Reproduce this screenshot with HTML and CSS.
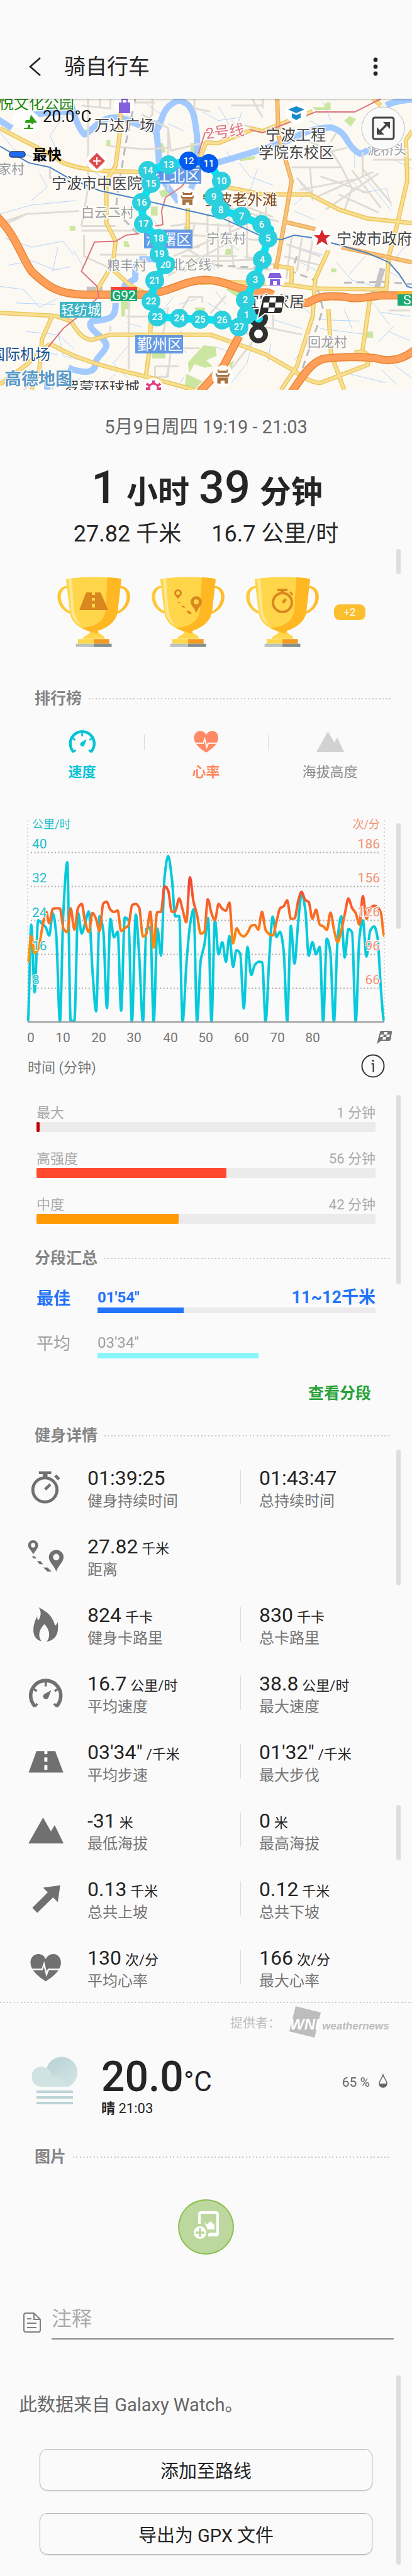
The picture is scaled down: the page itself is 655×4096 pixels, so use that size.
FILE: index.html
```html
<!DOCTYPE html>
<html lang="zh-CN">
<head>
<meta charset="utf-8">
<meta name="viewport" content="width=device-width, initial-scale=1">
<title>骑自行车</title>
<link rel="stylesheet" href="styles.css">
</head>
<body>
<svg class="defs" aria-hidden="true">
  <symbol id="i-watch" viewBox="0 0 58 58">
    <circle cx="27.4" cy="33" r="19.2" fill="none" stroke="currentColor" stroke-width="4.8"/>
    <path fill="currentColor" d="M17.800 3.600h19.700v4.300h-6v5h-7.600v-5h-6.100zM45.800 8.500l5.900 6.200-3.800 3.100-5.900-6.200zM34.500 22.400l3 3.400-8 8.100-3.300-3.400z"/>
  </symbol>
  <symbol id="i-route" viewBox="0 0 58 58">
    <g transform="translate(-44 29) scale(.4177 .3093) translate(0 -667)" fill="currentColor" fill-rule="evenodd">
      <path d="M127 658C120 640 107 630 107 612a19 26 0 0 1 38 0C145 630 134 640 127 658zM118 612a8 12 0 0 0 16 0a8 12 0 0 0-16 0z"/>
      <path d="M214 748C206 715 186 700 186 673a28 37 0 0 1 56 0C242 700 222 715 214 748zM202 673a12 17 0 0 0 24 0a12 17 0 0 0-24 0z"/>
      <path d="M121 669h11l7 11h-11zM141 694h13l10 16h-13zM165 727h16l15 20h-16z"/>
    </g>
  </symbol>
  <symbol id="i-flame" viewBox="0 0 58 58">
    <g transform="translate(-44 29) scale(.4177 .3093) translate(0 -1019.500)" fill="currentColor">
      <path d="M147 931C185 955 205 990 209 1026C215 1022 219 1014 220 1006C224 1060 217 1098 177 1109C193 1085 190 1045 169 1018C148 1045 143 1080 158 1106C120 1095 120 1030 142 977C141 985 143 993 144 999C155 985 160 955 147 931Z"/>
    </g>
  </symbol>
  <symbol id="i-gauge" viewBox="0 0 58 58">
    <path d="M11.600 50A24 24 0 1 1 45.800 50" fill="none" stroke="currentColor" stroke-width="5.600"/>
    <path d="M28.700 12v6.500M9.500 22.500l5 3.500M48 22.500l-5 3.500M11 50.500l4.500-4.500M46.400 50.500l-4.500-4.500" fill="none" stroke="currentColor" stroke-width="3.600"/>
    <path fill="currentColor" d="M37.400 24.400L33 36.500C31 40.500 24.600 39 24.500 34.500C24.500 32.500 25.500 31.500 26.500 30.800z"/>
  </symbol>
  <symbol id="i-road" viewBox="0 0 58 58">
    <path fill="currentColor" fill-rule="evenodd" d="M14 12.200H26.500V16.500Q26.500 17.200 27.300 17.200H30.700Q31.400 17.200 31.400 16.500V12.200H43.800L56.700 46.600H1.500zM27.200 22.300q-.8 0-.8.8v5.400q0 .8.800.8h3.400q.8 0 .8-.8v-5.400q0-.8-.8-.8zM27.200 34.600q-.8 0-.8.8v6q0 .8.800.8h3.400q.8 0 .8-.8v-6q0-.8-.8-.8z"/>
  </symbol>
  <symbol id="i-peak" viewBox="0 0 58 58">
    <path fill="currentColor" d="M1.100 50.300L24.500 8.900L37 30.900L42.900 21L57.100 50.300z"/>
  </symbol>
  <symbol id="i-arrow" viewBox="0 0 58 58">
    <path fill="currentColor" d="M51.700 7.700L24.500 11.400L32 19.100L7.400 43.500L15.300 51.600L40.400 27.100L47.900 34.600z"/>
  </symbol>
  <symbol id="i-heart" viewBox="0 0 58 58">
    <path fill="currentColor" d="M28.700 16.200C26.500 10.500 21.500 8 16.500 8C8.500 8.400 4 15 4.500 23C5.500 34 16 43.500 28.700 51.400C41.500 43.500 52 34 52.900 23C53.400 15 48.500 8 41 8C35.500 8 31 11 28.700 16.200z"/>
    <path class="pulse" d="M2 32.600h21l3-8.700 4 16.400 3-7.700h23"/>
  </symbol>
  <symbol id="cup" viewBox="0 0 116 112">
    <g transform="scale(.4177 .2474) translate(-217 -865)">
      <path d="M255 930C212 935 212 1060 268 1097" fill="none" stroke="#ffc935" stroke-width="13"/>
      <path d="M457 930C500 935 500 1060 445 1097" fill="none" stroke="#ffbd2b" stroke-width="13"/>
      <path fill="#ffd54a" d="M250 882C300 862 411 862 461 882L446 1100C438 1155 410 1190 372 1213C375 1240 398 1240 398 1264H314C316 1240 345 1240 340 1215C290 1190 270 1145 266 1100Z"/>
      <path fill="#ffb824" d="M408 869C440 872 461 876 461 882L446 1100C438 1155 410 1190 372 1213L368 1232L334 1214L308 1194C380 1185 400 1130 402 1060Z"/>
      <path fill="#ffe68f" d="M260 878L272 874L281 1080C286 1130 300 1165 311 1182C285 1160 272 1120 270 1080Z"/>
      <path fill="#ffd54a" d="M296 1266h60v30h-60z"/><path fill="#f5991f" d="M356 1266h59v30h-59z"/>
      <path fill="#b9c3c0" d="M288 1296h68v21h-68z"/><path fill="#84908d" d="M356 1296h68v21h-68z"/>
    </g>
  </symbol>
  <symbol id="temple" viewBox="0 0 32 32">
    <circle cx="16" cy="16" r="16" fill="#fff"/>
    <path fill="#a9713f" d="M8 6h2v2h12V6h2l-1 5H9zM5 12h3v2h16v-2h3l-2 5H7zM8 18h16v9h-5v-4h-6v4H8z"/>
  </symbol>
</svg>

<header class="bar">
  <button class="bar-btn" aria-label="返回"><svg width="20" height="30" viewBox="0 0 20 30"><path d="M18 1L2 15l16 14" fill="none" stroke="#252525" stroke-width="2.600"/></svg></button>
  <h1 class="bar-title">骑自行车</h1>
  <button class="bar-btn" aria-label="更多选项"><svg width="8" height="30" viewBox="0 0 8 30"><g fill="#252525"><circle cx="4" cy="4" r="3.400"/><circle cx="4" cy="15" r="3.400"/><circle cx="4" cy="26" r="3.400"/></g></svg></button>
</header>

<section class="map" aria-label="路线地图">
<svg class="wide" viewBox="0 0 655 463">
  <rect width="655" height="463" fill="#fcf9f2"/>
  <g class="lines" transform="translate(0 -157) scale(.4177 .2397)">
    <g class="stream">
      <path d="M100 655l30 90M170 655l45 60 60 40M270 700l-80 200 30 120M0 880l60 120 90 60M150 1150l30 90-60 90M0 1420l120-60 170-30M20 1580l100 60 120-40 40 90M30 1760l90-30 90 60 60-20M0 1900l90 20 60 120 70-60M60 2010l150 10M220 1640l-20 160M280 1660l40 120M100 2200l120 20 60 90M20 2330l200 20M220 2200l20 160 70 30M300 2050l60 40M560 690l60 80 40-80M640 820l60 50M770 740l60 60 80-20M830 700l40 120-30 60M920 740l-20 120M880 800l60 90M860 1000l30 80M910 1080l40 90 90 60M980 1120l-30 160M1180 800l60 60M1230 680l30 120M1350 1020v90M1130 1180l40 100-50 80M1120 1400l80 60M1340 1200l40 80 90-30M1470 1250l20 120M1390 1180l100 220M1500 1060l68 60M1440 1560l60 80M1560 1600l-60 120M1130 1640l100 50M1100 1700l110 100M1280 1740l60 120 90 40M1330 1820l60-120M1480 1800l60 60M1080 1940l60 120M880 1500l-20 140M820 1560l90 100M760 1700l60 90M620 2060l40-90M680 2020l70-40M790 2010l60 60M820 1930l40 90M640 2260l70 80M650 2380l-20 130M700 2500l-30 86M820 2300l60 40M960 2270l-20 140-60 130M1030 2280l-10 120M1040 2120l110 60M1130 2010l60 80M1210 2120l160 10M1220 2180l180 40M1310 2050l30 130M1420 2010l60 140M1450 2070l110 30M1500 2160l-60 110M1480 2200l80 60M1450 2450l60 100M1500 2420l68 90M1330 2480l140 60M1180 2250l-60 140M490 2290l-60 120 60 100M440 2480l-60 100M310 2500l-50 80M40 2480l80 60M480 2140l60 30M330 1100l60 80M480 760l60 90M560 1200l-40 80M570 1430l40 90"/>
    </g>
    <g class="green">
      <path d="M775 2290l45 10 5 60-40 30 25 40-30 10-40-25-20 60-5-70zM710 2480l60 50-30 56h-40zM460 2000h36v50h-20v50h-14zM578 2330h52v48h-52zM725 950h25v70h-25zM590 950h30l10 60-40 10zM1240 680h18v50h-58l-10-20h45zM405 930h15v40h-15zM855 1915h60v70zM860 1650h25v40h-30zM265 1500h22v30h-22zM470 1600h16l10 40h-24zM740 2040h40v40h-30zM575 1370h25v60h-25zM605 1270l50-30v50l-40 20zM1310 800l20-30 25 20-20 50zM910 1050l60-15v20l-55 15zM1260 1780h20v26h-20zM1390 2200h30v40h-25zM870 2410l20-20-10 60zM700 1500h20v20h-20z"/>
    </g>
    <g class="river">
      <path d="M-10 790L45 850M130 760Q210 740 270 740M265 655C280 760 300 860 322 892C350 870 370 800 420 782S500 820 590 870C625 830 600 720 680 665C745 690 740 800 750 900V1130L720 1290M590 800Q605 1000 605 1090C600 1180 650 1260 680 1340M760 1110C850 1070 1000 990 1100 930C1140 890 1200 845 1260 845C1330 880 1310 960 1370 1020C1410 1000 1410 970 1460 970M1470 700Q1500 670 1568 660M515 1750V1850L475 1890V1980M440 2010C440 2100 430 2120 350 2130C320 2180 400 2230 405 2290C400 2340 370 2360 365 2400C365 2480 320 2480 260 2440M180 2500V2586M530 1720H600"/>
    </g>
    <g class="minor">
      <path d="M335 655V1250L310 1500M380 655V720M420 655V720L310 700M500 680H590M580 655V760L530 850M540 760L640 850 650 1000 790 940M650 980L550 990 420 970M640 850V1260M0 1480L100 1420 300 1400M100 1420L30 1480M190 1110V1180H380M310 1500H440M310 1530H520M320 1560V1700L420 1780M380 1690H560M690 1700H900M640 1830L720 1750 880 1600M700 1800L780 1720M560 1900L640 1950M740 655V720L800 740M960 655L980 720 1000 780M880 700L1000 700M1000 655V720M930 830L990 860M650 1500L730 1480 890 1500M620 1590L740 1560 1040 1600M740 1490L720 1660 820 1760M790 1420V1700M830 1480V1780M870 1440L890 1780M940 1330V1720M990 1400V1560M1020 1300L1000 1560M860 1320L1040 1440M860 1370L1060 1470M640 1640L760 1640M660 1700L930 1500M700 1740L1000 1720M900 1780L1060 1790M930 1700L1050 1760M1090 1620L1220 1700M1080 1700L1220 1760M1110 1570L1090 1850M1150 1570L1130 1800M1190 1590L1170 1800M1110 1110H1300L1260 1000 1150 920M1130 1180L1210 1330M1180 1110L1190 1330M1140 1260L1350 1190M1200 1310L1420 1140M1240 1390L1440 1150M1300 1110L1340 1250 1310 1400M1340 1130L1450 1380M1380 1120L1490 1350M1290 1290L1440 1410M1220 1170L1400 1280M1250 1010L1320 980M1280 880L1260 940M1420 1060H1568M1380 1010V1180M490 1900V2450M480 2100H580M580 2090V2180M640 2040L620 2220M690 2060L720 1970H770V2010M690 2200L650 2330 640 2470M600 2310H760M590 2430H680M590 2430V2500H640V2430M890 2130H900M860 1960L800 2080M1010 2170L1150 2220M1040 2060V2180M830 2560L960 2270M880 2140L950 2220M200 2480V2586M90 2586L150 2500M420 2200L420 2160M1560 2060H1480"/>
    </g>
    <g class="rail"><path d="M515 655L480 940 450 1250 440 1400 530 1560M820 1760L1020 1780M1310 1875L1460 1870 1568 1885M1130 1700L1110 1800 1200 1860 1230 2050 1200 2200 1140 2500 1110 2586"/></g>
    <path class="station" d="M1456 1780L1432 1930M1410 1935L1475 1915M330 1920h60"/>
    <defs>
      <path id="roads" d="M0 850C80 930 180 1000 240 1080C300 1120 360 1140 560 1140M460 740L455 900 440 1100 405 1200V1480L440 1600 430 1750 360 1950M0 2075L210 2095 270 2130C300 2220 320 2250 350 2254L420 2220H800L900 2280 1010 2350 1120 2460Q1180 2540 1220 2540L1400 2420V2360Q1390 2320 1350 2340M860 1240L1000 1290H1180L1290 1390 1400 1450 1568 1480M1568 870L1545 930 1550 1200 1510 1500 1480 1700 1470 1920 1200 1915 1100 1890 860 1870 760 1875M190 2280C280 2370 360 2420 560 2500L740 2586M200 2090L160 2250 150 2450 120 2586M575 2080L570 2300 555 2500M1250 1660L1200 1850 1190 2100 1130 2430 1070 2586M1410 1960L1380 2320M1250 2050L1260 2350 1310 2586M430 1790L500 1900 560 1950M715 1250V1600M720 1220L785 945 830 950 960 860M950 850L1000 870 1190 740M1420 655L1450 700M1040 1760L1110 1780V1880M0 2550L100 2420 190 2280"/>
      <path id="amber" d="M1055 655L1060 900 1110 1200 1080 1500 1060 1700 1040 1860M1080 1470L1200 1520M1300 1640L1568 1740"/>
      <path id="highway" d="M-10 1440C60 1560 80 1700 120 1800C180 1900 220 1950 320 1955H560C660 1930 700 1860 780 1857C860 1860 880 1910 980 1940H1020L1040 1955M1110 2010L1170 2010Q1210 1965 1260 1965T1330 1975 1450 1960H1568M910 2230L850 2430 760 2600M1580 2320C1530 2390 1480 2400 1440 2380C1380 2360 1280 2370 1230 2380C1180 2410 1150 2500 1110 2600"/>
    </defs>
    <use href="#roads" stroke="#ecc65c" stroke-width="7"/>
    <use href="#roads" stroke="#f8df92" stroke-width="4"/>
    <use href="#amber" stroke="#eeab54" stroke-width="7"/>
    <use href="#amber" stroke="#f7c47c" stroke-width="4"/>
    <use href="#highway" stroke="#e88538" stroke-width="13"/>
    <use href="#highway" stroke="#ff9f59" stroke-width="10"/>
    <path class="metro" d="M840 880H780L755 1020M950 860L1000 880 1200 743H1350L1450 655M700 1220L690 1240 630 1310 615 1400 620 1490 590 1500M530 1550L480 1560 440 1600 360 1605 310 1800 370 1900 375 1970 290 2110 240 2180 180 2310"/>
    <path class="blue-line" d="M0 970L110 1080 190 1110 260 1180 380 1265 500 1310 700 1390 850 1450 1000 1570 1070 1590 1120 1560 1180 1575 1280 1620 1400 1680 1480 1740 1520 1820 1550 1900 1568 1910"/>
  </g>

  <g fill="#4a8be6" fill-opacity=".85">
    <path d="M250 109h70v26h-70zM229 208h77v30h-77zM215 376h76v29h-76z"/>
  </g>
  <path fill="#3db4c4" d="M95 323h66v25H95z"/>
  <path fill="#1aa971" d="M176 299h42v23h-42zM632 306h30v23h-30z"/>
  <path fill="#f3453c" d="M176 299h42v5h-42z"/><path fill="#ffb52e" d="M632 306h30v5h-30z"/>

  <circle cx="198" cy="8" r="16" fill="#fff"/><path fill="#8560dc" d="M189 6h18v17h-18z"/><path d="M194 8V1h8v7" fill="none" stroke="#8560dc" stroke-width="2"/>
  <circle cx="471" cy="22" r="17" fill="#fff"/><path fill="#168cc8" d="M458 17l13-5 13 5-13 6zM464 23l7 3 7-3v7l-7 4-7-4z"/>
  <circle cx="154" cy="99" r="16" fill="#fff"/><path fill="#dd4b4e" d="M154 86l13 13-13 13-13-13z"/><path d="M154 93v12M148 99h12" stroke="#fff" stroke-width="2"/>
  <use href="#temple" x="282" y="142" width="32" height="32"/>
  <use href="#temple" x="337" y="424" width="34" height="34"/>
  <circle cx="512" cy="221" r="16" fill="#fff"/><path fill="#d8282c" d="M512 208l4 9h9l-7 6 3 10-9-6-9 6 3-10-7-6h9z"/>
  <circle cx="437" cy="287" r="16" fill="#fff"/><path fill="#8560dc" d="M429 277h16l3 8h-22zM429 287h16v9h3v1h-21v-1h2z"/><path fill="#fff" d="M434 290h6v6h-6z"/>
  <circle cx="47" cy="38" r="17" fill="#fff"/><path fill="#2b9f12" d="M49 25l10 13h-6v2h-5v6h5v2H38v-2h6v-6h-5l2-6h6z"/>
  <circle cx="39" cy="24" r="10" fill="#fff"/><circle cx="28" cy="31" r="8" fill="#fff"/><path d="M24 40h26M24 45h18" stroke="#fff" stroke-width="3"/>

  <g class="poi">
    <text x="-2" y="16" fill="#1f8a12">悦文化公园</text>
    <text x="150" y="51">万达广场</text>
    <text x="422" y="66">宁波工程</text>
    <text x="411" y="94">学院东校区</text>
    <text x="82" y="143">宁波市中医院</text>
    <text x="321" y="169" fill="#7d4512">宁波老外滩</text>
    <text x="535" y="231">宁波市政府</text>
    <text x="388" y="331">宜家家居</text>
    <text x="-16" y="415" fill="#12508f">国际机场</text>
    <text x="102" y="468">罗蒙环球城</text>
    <text x="328" y="64" fill="#e0727f" transform="rotate(-6 328 64)">2号线</text>
  </g>
  <circle cx="244" cy="460" r="16" fill="#fff"/><circle cx="244" cy="460" r="7" fill="none" stroke="#e23d80" stroke-width="3"/><path d="M244 448v4M233 453l4 3M255 453l-4 3M232 461h4M256 461h-4" stroke="#e23d80" stroke-width="4"/>
  <g class="village">
    <text x="584" y="88">泥桥头</text><text x="-3" y="119">家村</text><text x="129" y="188">白云二村</text>
    <text x="328" y="229">宁东村</text><text x="170" y="272">粮丰村</text><text x="489" y="394">回龙村</text>
    <text x="273" y="271">北仑线</text>
  </g>
  <g class="district">
    <text x="246" y="131">江北区</text><text x="232" y="232">海曙区</text><text x="218" y="399">鄞州区</text>
    <text class="small" x="97" y="343">轻纺城</text><text class="small" x="178" y="320">G92</text><text class="small" x="641" y="327">S</text>
  </g>
  <text class="amap" x="7" y="455">高德地图</text>

  <g id="route"></g>

  <rect x="15" y="84" width="25" height="9" rx="4" fill="#1f6cf0" stroke="#2b3c66" stroke-width="1.500"/>
  <text class="temp" x="68" y="37">20.0°C</text>
  <text class="fast" x="52" y="97">最快</text>
  <circle cx="609" cy="47" r="34" fill="#fafafa" stroke="#bbb"/>
  <rect x="593" y="30" width="33" height="34" rx="3" fill="none" stroke="#444" stroke-width="3"/>
  <path d="M604 52l11-11" stroke="#444" stroke-width="3.500"/><path fill="#444" d="M609 37h11v11zM599 45v12h12z"/>
</svg>
</section>

<main>
<section class="block summary">
  <p class="date">5月9日周四 19:19 - 21:03</p>
  <p class="duration">1 <b>小时</b> 39 <b>分钟</b></p>
  <p class="totals"><span>27.82 千米</span><span>16.7 公里/时</span></p>
  <div class="cups">
    <svg width="116" height="112" viewBox="0 0 116 112"><use href="#cup"/><path fill="#d9871e" d="M46 25h9v4h5v-4h9l12 28H35zM55 34v4h5v-4zM55 43v6h5v-6z" fill-rule="evenodd"/></svg>
    <svg width="116" height="112" viewBox="0 0 116 112"><use href="#cup"/><g fill="#d9871e" fill-rule="evenodd"><path d="M42 36c-1-4-6-6-6-10a6 6 0 0 1 12 0c0 4-5 6-6 10zM39 26a3 3 0 0 0 6 0a3 3 0 0 0-6 0z"/><path d="M71 58c-2-8-9-12-9-18a9 9 0 0 1 18 0c0 6-7 10-9 18zM67 40a4 4 0 0 0 8 0a4 4 0 0 0-8 0z"/><path d="M41 40h3l2 2h-3zM47 46h4l3 3h-4zM55 54h5l4 5h-5z"/></g></svg>
    <svg width="116" height="112" viewBox="0 0 116 112"><use href="#cup"/><circle cx="58" cy="41" r="15" fill="none" stroke="#d9871e" stroke-width="4"/><path fill="#d9871e" d="M50 19h16v4h-5v3h-6v-3h-5zM71 23l4 5-2 2-4-5zM62 34l3 3-5 6-3-3z"/></svg>
    <button class="more">+2</button>
  </div>
  <i class="thumb thumb-a"></i>
</section>

<section class="block">
  <h2 class="head"><span>排行榜</span></h2>
  <div class="tabs">
    <button class="tab speed"><svg><use href="#i-gauge"/></svg>速度</button>
    <button class="tab heart"><svg><use href="#i-heart"/></svg>心率</button>
    <button class="tab alt"><svg><use href="#i-peak"/></svg>海拔高度</button>
  </div>
</section>

<section class="block chart">
  <svg class="wide" viewBox="0 0 655 370" role="img" aria-label="速度与心率图表">
    <defs><linearGradient id="hr" gradientUnits="userSpaceOnUse" x1="0" y1="100" x2="0" y2="222"><stop offset="0" stop-color="#f24336"/><stop offset=".5" stop-color="#fb6a24"/><stop offset="1" stop-color="#ff9a00"/></linearGradient></defs>
    <g class="grid">
      <path d="M44 9V330M611 9V330"/><path d="M49 60.500H604M49 114.500H604M49 168.500H604M49 222.500H604M49 276.500H604"/>
    </g>
    <path id="speed-line" class="speed-line"/>
    <path id="hr-line" class="hr-line"/>
    <path d="M44 330H611" stroke="#999" stroke-width="2"/>
    <g class="ax-l"><text class="unit" x="51" y="22">公里/时</text><text x="51" y="54">40</text><text x="51" y="108">32</text><text x="51" y="163">24</text><text x="51" y="216">16</text><text x="51" y="270">8</text></g>
    <g class="ax-r"><text class="unit" x="604" y="22">次/分</text><text x="604" y="54">186</text><text x="604" y="108">156</text><text x="604" y="162">126</text><text x="604" y="216">96</text><text x="604" y="270">66</text></g>
    <g class="ax-x"><text x="49" y="362">0</text><text x="100" y="362">10</text><text x="157" y="362">20</text><text x="213" y="362">30</text><text x="271" y="362">40</text><text x="327" y="362">50</text><text x="384" y="362">60</text><text x="441" y="362">70</text><text x="497" y="362">80</text></g>
    <g transform="translate(599 344)"><path fill="#757575" d="M5 2Q5 0 7 0H22Q24.500 0 24 3L22 14Q22 16 19 16H7L0 21z"/><path fill="#fafafa" d="M12 2h5l-1 4h-5zM6 6h5l-1 4H5zM16 6h5l-1 4h-5zM10 10h5l-1 4h-5z"/></g>
  </svg>
  <div class="chart-foot"><span>时间 (分钟)</span>
    <button class="info" aria-label="信息"><svg width="38" height="38" viewBox="0 0 38 38"><circle cx="19" cy="19" r="17.500" fill="none" stroke="#333" stroke-width="2"/><circle cx="19" cy="10.500" r="1.600" fill="#333"/><path d="M16.500 15.500H19.500V29" fill="none" stroke="#333" stroke-width="2"/></svg></button>
  </div>
  <i class="thumb thumb-b"></i>
</section>

<section class="block zones">
  <div class="zone"><p><span>最大</span><span>1 分钟</span></p><div class="track"><div class="fill max" style="width:1%"></div></div></div>
  <div class="zone"><p><span>高强度</span><span>56 分钟</span></p><div class="track"><div class="fill hard" style="width:56%"></div></div></div>
  <div class="zone"><p><span>中度</span><span>42 分钟</span></p><div class="track"><div class="fill mid" style="width:42%"></div></div></div>
  <i class="thumb thumb-c"></i>
</section>

<section class="block">
  <h2 class="head splits-head"><span>分段汇总</span></h2>
  <div class="split best"><span class="name">最佳</span><div><p><span>01'54"</span><span class="range">11~12千米</span></p><div class="pace"><div class="pace-fill" style="width:31%"></div></div></div></div>
  <div class="split"><span class="name">平均</span><div><p><span>03'34"</span></p><div class="pace"><div class="pace-fill" style="width:58%"></div></div></div></div>
  <a class="see" href="#splits">查看分段</a>
</section>

<section class="block details">
  <h2 class="head"><span>健身详情</span></h2>
  <div class="row"><svg><use href="#i-watch"/></svg><dl><dd>01:39:25</dd><dt>健身持续时间</dt></dl><dl class="second"><dd>01:43:47</dd><dt>总持续时间</dt></dl></div>
  <div class="row"><svg><use href="#i-route"/></svg><dl><dd>27.82 <small>千米</small></dd><dt>距离</dt></dl></div>
  <div class="row"><svg><use href="#i-flame"/></svg><dl><dd>824 <small>千卡</small></dd><dt>健身卡路里</dt></dl><dl class="second"><dd>830 <small>千卡</small></dd><dt>总卡路里</dt></dl></div>
  <div class="row"><svg><use href="#i-gauge"/></svg><dl><dd>16.7 <small>公里/时</small></dd><dt>平均速度</dt></dl><dl class="second"><dd>38.8 <small>公里/时</small></dd><dt>最大速度</dt></dl></div>
  <div class="row"><svg><use href="#i-road"/></svg><dl><dd>03'34" <small>/千米</small></dd><dt>平均步速</dt></dl><dl class="second"><dd>01'32" <small>/千米</small></dd><dt>最大步伐</dt></dl></div>
  <div class="row"><svg><use href="#i-peak"/></svg><dl><dd>-31 <small>米</small></dd><dt>最低海拔</dt></dl><dl class="second"><dd>0 <small>米</small></dd><dt>最高海拔</dt></dl></div>
  <div class="row"><svg><use href="#i-arrow"/></svg><dl><dd>0.13 <small>千米</small></dd><dt>总共上坡</dt></dl><dl class="second"><dd>0.12 <small>千米</small></dd><dt>总共下坡</dt></dl></div>
  <div class="row"><svg><use href="#i-heart"/></svg><dl><dd>130 <small>次/分</small></dd><dt>平均心率</dt></dl><dl class="second"><dd>166 <small>次/分</small></dd><dt>最大心率</dt></dl></div>
  <i class="thumb thumb-d"></i><i class="thumb thumb-e"></i>
</section>

<section class="weather">
  <div class="provider"><span>提供者：</span>
    <svg width="158" height="50" viewBox="0 0 158 50"><path fill="#bdbdbd" d="M10 0L50 10L40 50L0 40z"/><text class="wn" x="1" y="37">WNI</text><text class="wname" x="52" y="37">weathernews</text></svg>
  </div>
  <div class="now">
    <svg class="cloud" width="73" height="78" viewBox="0 0 73 78"><defs><linearGradient id="cg" x1="0" y1="0" x2="1" y2="1"><stop offset="0" stop-color="#b8d2d8"/><stop offset="1" stop-color="#d3e5e3"/></linearGradient></defs><path fill="url(#cg)" d="M23 19A25 25 0 1 1 58 48H30V32z"/><path fill="#d0e3e2" d="M15 48A16 16 0 1 1 31 32H45L58 48z"/><path fill="#bcd4d6" d="M7 54h58v4H7zM7 63h58v4H7zM7 72h58v4H7z"/></svg>
    <div><p class="deg">20.0<small>°C</small></p><p class="cond"><b>晴</b> 21:03</p></div>
    <p class="humid">65 %<svg width="16" height="24" viewBox="0 0 16 24"><path d="M8 2C6 8 2 12 2 16a6 6 0 0 0 12 0c0-4-4-8-6-14z" fill="none" stroke="#666" stroke-width="1.500"/><path fill="#666" d="M2 16h12a6 6 0 0 1-12 0z"/></svg></p>
  </div>
</section>

<section class="block">
  <h2 class="head photo-head"><span>图片</span></h2>
  <button class="add" aria-label="添加图片"><svg width="44" height="58" viewBox="0 0 44 58"><path d="M11 24V9Q11 6 14 6H37Q40 6 40 9V39Q40 42 37 42H25" fill="none" stroke="#fff" stroke-width="4"/><path fill="#fff" d="M26 38h14v5H25zM19 22l4 3 6-5 6 6v7H24z"/><circle cx="12" cy="38" r="10" fill="#fff"/><path d="M12 31v14M5 38h14" stroke="#bdd89e" stroke-width="3.600"/></svg></button>
</section>

<div class="note">
  <svg width="28" height="32" viewBox="0 0 28 32"><path d="M4 1H17L27 11V28Q27 31 24 31H4Q1 31 1 28V4Q1 1 4 1zM17 1V11H27M6 10H13M6 17H21M6 24H21" fill="none" stroke="#808080" stroke-width="2"/></svg>
  <input type="text" placeholder="注释" aria-label="注释">
</div>

<section class="block source">
  <p>此数据来自 Galaxy Watch。</p>
  <button class="action">添加至路线</button>
  <button class="action">导出为 GPX 文件</button>
  <i class="thumb thumb-f"></i>
</section>
</main>
<script src="script.js"></script>
</body>
</html>
```

FILE: styles.css
```css
* { box-sizing: border-box; }
body {
  margin: 0;
  background: #fafafa;
  color: #252525;
  font-family: Roboto, "Noto Sans CJK SC", sans-serif;
}
h1, h2, p, dl, dd, dt { margin: 0; }
button { border: 0; padding: 0; background: none; color: inherit; font: inherit; }
svg { display: block; }
.defs { position: absolute; width: 0; height: 0; }
.wide { width: 100%; height: auto; }
.block { position: relative; }
.pulse { fill: none; stroke: #fafafa; stroke-width: 2.5px; }

.bar { display: flex; align-items: center; padding: 76px 54px 21px 46px; box-shadow: 0 1px 3px rgba(0, 0, 0, .3); position: relative; }
.bar-btn { display: flex; align-items: center; height: 60px; }
.bar-title { flex: 1; margin-left: 36px; font-size: 34px; line-height: 60px; font-weight: 400; }

.map { overflow: hidden; }
.lines path { fill: none; vector-effect: non-scaling-stroke; stroke-linejoin: round; }
.lines .green path { fill: #cbe6a0; }
.stream path { stroke: #b4d4fc; stroke-width: 1px; }
.river path { stroke: #a3caff; stroke-width: 10px; }
.minor path { stroke: #e0dcd5; stroke-width: 3px; }
.rail path { stroke: #bcbcc0; stroke-width: 3px; stroke-dasharray: 12 8; }
.lines .station { stroke: #c4c4c8; stroke-width: 9px; }
.lines .metro { stroke: #dc7480; stroke-width: 2px; }
.lines .blue-line { stroke: #4a83c6; stroke-width: 2px; }
.map text { font-size: 24px; }
.poi { fill: #444; stroke: #fff; stroke-width: 3px; paint-order: stroke; }
.village { fill: #999; stroke: #fff; stroke-width: 3px; paint-order: stroke; }
.map .village text { font-size: 21px; }
.district { fill: #fff; }
.map .district .small { font-size: 21px; }
.map .amap { font-size: 27px; font-weight: 700; fill: #5c9ac8; stroke: #fff; stroke-width: 2px; paint-order: stroke; }
.map .temp { font-size: 26px; fill: #111; }
.map .fast { font-size: 23px; font-weight: 700; fill: #000; }
.map .pin { font-size: 15px; font-weight: 500; fill: #fff; text-anchor: middle; }

.thumb { position: absolute; right: 18px; width: 7px; border-radius: 4px; background: #dedede; }
.thumb-a { top: 253px; height: 40px; }
.thumb-b { top: 14px; height: 168px; }
.thumb-c { top: 26px; height: 301px; }
.thumb-d { top: 73px; height: 216px; }
.thumb-e { top: 638px; height: 88px; }
.thumb-f { top: 57px; height: 301px; }

.summary { padding: 39px 0 64px; text-align: center; }
.date { font-size: 29px; line-height: 40px; color: #666; }
.duration { margin-top: 35px; font-size: 72px; line-height: 84px; font-weight: 500; }
.duration b { font-size: 50px; line-height: 1; margin: 0 -3px; }
.totals { display: flex; justify-content: center; gap: 48px; margin-top: 7px; font-size: 36px; line-height: 48px; }
.cups { display: flex; align-items: center; gap: 34px; margin-top: 44px; padding-left: 91px; }
.more { width: 50px; height: 25px; margin-left: -10px; border-radius: 9px; background: #fbbf2d; color: #fff; font-size: 17px; line-height: 25px; }

.head { display: flex; align-items: center; gap: 11px; padding: 0 34px 0 55px; font-size: 25px; line-height: 36px; font-weight: 700; color: #858585; }
.head::after { content: ""; flex: 1; height: 2px; background: repeating-linear-gradient(90deg, #c8c8c8 0 2px, transparent 2px 5px, #c8c8c8 5px 7px, transparent 7px 11px); }

.tabs { display: grid; grid-template-columns: repeat(3, 1fr); margin: 27px 32px 0; }
.tab { display: flex; flex-direction: column; align-items: center; gap: 12px; font-size: 22px; line-height: 28px; }
.tab svg { width: 46px; height: 46px; }
.tab + .tab { background: linear-gradient(#dcdcdc, #dcdcdc) 0 12px / 1px 24px no-repeat; }
.speed { color: #06c3d6; font-weight: 700; }
.heart { color: #ff8a65; font-weight: 700; }
.alt { color: #8c8c8c; }
.alt svg { color: #d2d2d2; }

.chart { margin-top: 53px; }
.grid path { fill: none; stroke: #aaa; stroke-width: 2px; stroke-dasharray: 2 3.4; }
.grid path:first-child { stroke-width: 1px; stroke-dasharray: 2 4; }
.speed-line, .hr-line { fill: none; stroke-width: 4px; stroke-linejoin: round; }
.speed-line { stroke: #06cadb; }
.hr-line { stroke: url(#hr); }
.chart text { font-size: 21px; }
.chart .unit { font-size: 18px; }
.ax-l { fill: #1cc0cc; }
.ax-r { fill: #f29072; text-anchor: end; }
.ax-l, .ax-r { stroke: #fafafa; stroke-width: 2px; paint-order: stroke; }
.ax-x { fill: #777; text-anchor: middle; }
.chart-foot { display: flex; align-items: center; justify-content: space-between; height: 40px; margin: 10px 43px 0 44px; font-size: 22px; color: #777; }

.zones { display: grid; gap: 31px; padding: 43px 58px 0; }
.zone p { display: flex; justify-content: space-between; margin-bottom: 2px; font-size: 22px; line-height: 24px; color: #aaa; }
.track { height: 16px; border-radius: 2px; background: #ebebeb; }
.fill { height: 16px; border-radius: 2px; }
.max { background: #c00008; }
.hard { background: #ff4a30; }
.mid { background: #ff9a05; }

.splits-head { margin: 37px 0 28px; }
.split { display: grid; grid-template-columns: 97px 1fr; margin: 0 58px 31px; color: #a0a0a0; }
.name { font-size: 27px; line-height: 36px; }
.split p { display: flex; justify-content: space-between; height: 32px; font-size: 24px; line-height: 32px; }
.split .range { font-size: 27px; }
.best { color: #2474fb; font-weight: 700; }
.pace { height: 9px; }
.best .pace { background: #ebebeb; }
.pace-fill { height: 9px; background: #89f5fb; }
.best .pace-fill { background: #2474fb; }
.see { display: block; width: max-content; margin: 40px 65px 0 auto; color: #27a237; font-size: 25px; line-height: 32px; font-weight: 700; text-decoration: none; }

.details { padding-top: 33px; }
.details .head { margin-bottom: 9px; }
.row { display: grid; grid-template-columns: 58px 243px 1fr; align-items: center; height: 109px; padding-left: 44px; }
.row > svg { width: 58px; height: 58px; color: #707070; }
.row dl { height: 55px; padding-left: 37px; }
.row .second { padding-left: 67px; background: linear-gradient(#dcdcdc, #dcdcdc) 37px 0 / 1px 55px no-repeat; }
.row dd { margin-top: -6px; font-size: 32px; line-height: 38px; white-space: nowrap; }
.row small { margin-left: -2px; font-size: 22px; line-height: 1; }
.row dt { font-size: 24px; line-height: 36px; color: #757575; }

.weather { background: repeating-linear-gradient(90deg, #c8c8c8 0 2px, transparent 2px 5px, #c8c8c8 5px 7px, transparent 7px 11px) 0 1px / 100% 2px no-repeat; padding-top: 8px; }
.provider { display: flex; align-items: center; justify-content: flex-end; gap: 14px; padding-right: 37px; font-size: 20px; color: #bdbdbd; }
.wn { font: italic 700 24px "Liberation Sans", sans-serif; fill: #fff; }
.wname { font: italic 700 17px "Liberation Sans", sans-serif; fill: #bdbdbd; }
.now { display: flex; align-items: flex-start; padding: 27px 38px 0 51px; }
.cloud { margin: 3px 37px 0 0; }
.deg { font-size: 66px; line-height: 72px; font-weight: 500; }
.deg small { font-size: 44px; line-height: 1; font-weight: 400; }
.cond { font-size: 22px; line-height: 28px; }
.humid { display: flex; gap: 13px; margin: 30px 0 0 auto; font-size: 21px; line-height: 28px; color: #666; }

.photo-head { margin: 45px 0 49px; }
.add { display: flex; align-items: center; justify-content: center; width: 89px; height: 88px; margin: 0 auto; border: 2px solid #8cc152; border-radius: 50%; background: #bdd89e; }

.note { display: flex; gap: 17px; margin: 77px 29px 0 37px; }
.note svg { margin-top: 15px; }
.note input { flex: 1; min-width: 0; height: 58px; padding: 0 0 7px; border: 0; border-bottom: 2px solid #8c8c8c; background: none; color: #252525; font: 32px Roboto, "Noto Sans CJK SC", sans-serif; }
.note input::placeholder { color: #aaa; opacity: 1; }

.source { padding: 84px 63px 34px; }
.source p { margin: 0 -33px 50px; font-size: 29px; line-height: 40px; color: #666; }
.action { display: block; width: 100%; height: 66px; border: 1px solid #b4b4b4; border-radius: 12px; font-size: 29px; box-shadow: 0 1px 2px rgba(0, 0, 0, .15); }
.action + .action { margin-top: 36px; }
```

FILE: script.js
```js
// Kilometre pins of the ride, in map units
const pins = [
  [392, 344], [390, 320], [406, 288], [417, 256], [426, 222], [416, 200], [384, 187],
  [351, 177], [340, 156], [352, 131], [332, 103], [300, 99], [268, 105], [235, 114],
  [240, 135], [225, 165], [228, 199], [252, 222], [253, 247], [263, 264], [246, 289],
  [240, 322], [250, 347], [285, 349], [318, 351], [353, 352], [380, 363]
];
const route = document.getElementById('route');
let out = '<circle cx="411" cy="374" r="11" fill="#fff" stroke="#303030" stroke-width="8"/>' +
  '<circle cx="411" cy="349" r="11" fill="#00e5f5" stroke="#303030" stroke-width="8"/>' +
  '<polyline points="' + pins.concat([pins[0]]).join(' ') + '" fill="none" stroke="#00e5f5" stroke-width="12" stroke-linejoin="round"/>' +
  '<circle cx="429" cy="208" r="7" fill="#00dcec"/><circle cx="271" cy="259" r="7" fill="#00dcec"/>' +
  '<path d="M332 100L300 98" stroke="#0a6cf5" stroke-width="13"/>';
for (let i = pins.length; i > 0; i--) {
  const [x, y] = pins[i - 1];
  const fill = i === 11 || i === 12 ? '#0459ee' : '#2bcfdd';
  out += `<circle cx="${x}" cy="${y}" r="15" fill="${fill}"/><text class="pin" x="${x}" y="${y + 5}">${i}</text>`;
}
out += '<path d="M417 317Q418 313 422 313H448Q454 313 453 318L449 338Q448 342 444 342H421L409 351z" fill="#2c2c2c" stroke="#fff" stroke-width="2"/>' +
  '<path fill="#fff" d="M429 316h10l-1 8h-10zM419 324h9l-1 8h-9zM438 324h11l-1 8h-11zM427 332h10l-1 7h-10z"/>';
route.innerHTML = out;

const speed = [106,1220,119,665,132,1052,145,640,160,660,174,680,187,728,201,600,214,720,228,1220,241,600,256,308,269,1215,283,1215,297,597,311,716,325,650,338,590,352,930,366,1160,379,617,393,700,407,1142,420,632,434,738,448,706,461,1156,475,625,489,640,502,1220,517,608,530,850,544,1220,557,690,572,680,585,1220,599,688,613,842,626,400,640,273,654,400,667,618,682,616,695,1220,710,880,724,660,737,577,750,1220,764,870,778,780,792,628,805,1220,818,640,832,835,846,765,860,878,873,730,887,907,900,812,914,830,928,1144,942,792,956,953,970,895,985,877,998,880,1011,1220,1025,850,1038,620,1052,736,1066,706,1080,820,1093,1220,1107,673,1121,888,1135,650,1148,490,1162,580,1175,843,1189,765,1203,835,1217,792,1230,1220,1244,745,1257,820,1271,1220,1285,750,1299,617,1312,854,1326,690,1340,710,1354,1220,1368,740,1381,640,1395,847,1409,700,1424,675,1437,740,1450,1040,1462,1215];
const heart = [106,880,119,730,132,828,147,800,160,690,176,592,187,657,201,575,214,572,228,573,242,690,256,708,269,572,283,694,297,570,311,547,324,650,338,708,352,598,365,630,379,703,393,545,406,534,420,580,434,593,448,585,461,702,475,685,489,670,503,553,517,547,530,570,544,733,557,720,572,591,585,797,598,594,613,592,626,447,640,470,654,592,667,590,682,516,695,580,709,652,723,395,736,530,750,610,764,718,778,705,791,521,805,600,818,640,832,547,846,575,860,586,873,540,887,772,901,686,914,720,928,733,942,712,956,672,970,667,983,694,997,592,1011,695,1025,720,1039,727,1052,650,1066,572,1080,560,1093,527,1107,632,1121,630,1135,530,1148,478,1162,525,1175,536,1189,632,1203,580,1217,665,1230,675,1244,695,1258,597,1272,700,1285,766,1299,700,1313,600,1326,516,1340,570,1354,600,1368,665,1381,502,1395,632,1409,570,1424,558,1437,565,1450,600,1462,730];

// Monotone cubic curve through the samples
function curve(flat) {
  const p = [];
  for (let i = 0; i < flat.length; i += 2) p.push([flat[i] * 0.4177, flat[i + 1] * 0.2784 - 10]);
  const slope = p.map((q, i) => {
    if (i === 0 || i === p.length - 1) return 0;
    const a = (q[1] - p[i - 1][1]) / (q[0] - p[i - 1][0]);
    const b = (p[i + 1][1] - q[1]) / (p[i + 1][0] - q[0]);
    return a * b <= 0 ? 0 : 2 * a * b / (a + b);
  });
  let d = 'M' + p[0];
  for (let i = 1; i < p.length; i++) {
    const h = (p[i][0] - p[i - 1][0]) / 3;
    d += `C${p[i - 1][0] + h} ${p[i - 1][1] + slope[i - 1] * h} ${p[i][0] - h} ${p[i][1] - slope[i] * h} ${p[i]}`;
  }
  return d;
}
document.getElementById('speed-line').setAttribute('d', curve(speed));
document.getElementById('hr-line').setAttribute('d', curve(heart));
```
